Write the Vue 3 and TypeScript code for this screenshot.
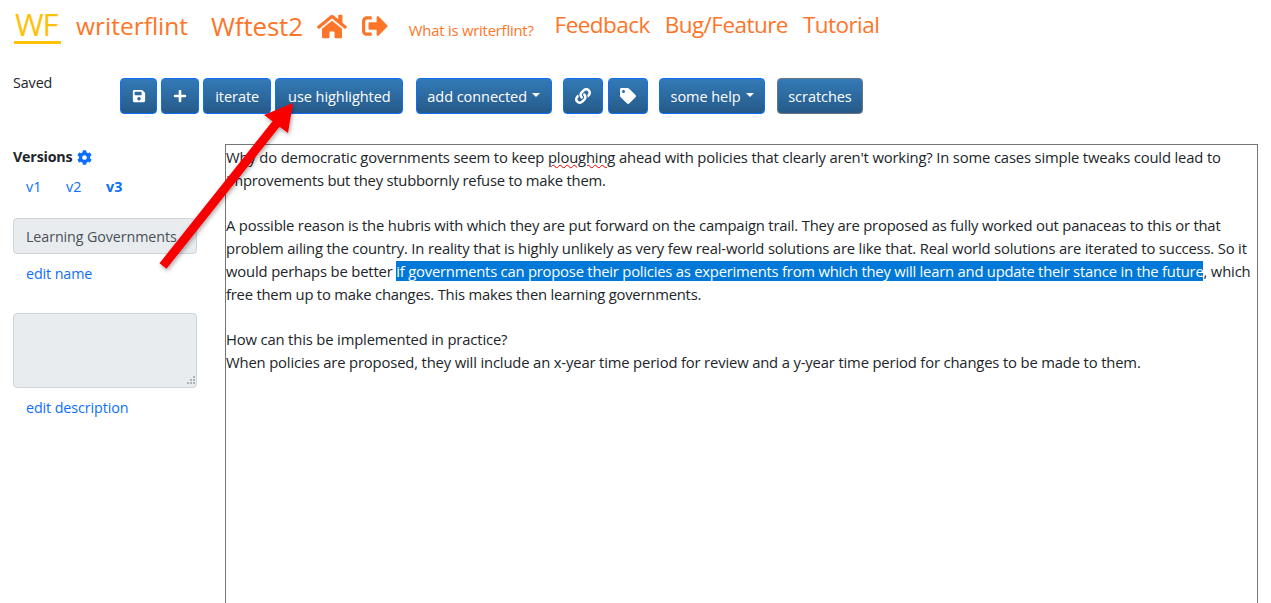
<script setup lang="ts">
interface Seg { t: string; hl?: boolean; sp?: boolean }
const lines: Seg[][] = [
  [{ t: 'Why do democratic governments seem to keep ' }, { t: 'ploughing', sp: true }, { t: " ahead with policies that clearly aren't working? In some cases simple tweaks could lead to" }],
  [{ t: 'improvements but they stubbornly refuse to make them.' }],
  [],
  [{ t: 'A possible reason is the hubris with which they are put forward on the campaign trail. They are proposed as fully worked out panaceas to this or that' }],
  [{ t: 'problem ailing the country. In reality that is highly unlikely as very few real-world solutions are like that. Real world solutions are iterated to success. So it' }],
  [{ t: 'would perhaps be better ' }, { t: 'if governments can propose their policies as experiments from which they will learn and update their stance in the future', hl: true }, { t: ', which' }],
  [{ t: 'free them up to make changes. This makes then learning governments.' }],
  [],
  [{ t: 'How can this be implemented in practice?' }],
  [{ t: 'When policies are proposed, they will include an x-year time period for review and a y-year time period for changes to be made to them.' }],
]
</script>

<template>
  <div class="page">
    <nav class="nav">
      <a class="brand">WF</a>
      <a class="big name">writerflint</a>
      <a class="big proj">Wftest2</a>
      <svg class="home" viewBox="0 0 576 512"><path fill="currentColor" d="M280.400 148.300L96 300.100V464a16 16 0 0 0 16 16l112-.3a16 16 0 0 0 15.900-16V368a16 16 0 0 1 16-16h64a16 16 0 0 1 16 16v95.600a16 16 0 0 0 16 16.100l112 .3a16 16 0 0 0 16-16V300L295.700 148.300a12.200 12.200 0 0 0-15.300 0zM571.600 251.500L488 182.600V44a12 12 0 0 0-12-12h-56a12 12 0 0 0-12 12v72.600L318.500 43a48 48 0 0 0-61 0L4.300 251.500a12 12 0 0 0-1.600 16.900l25.500 31A12 12 0 0 0 45.200 301l235.200-193.700a12.200 12.200 0 0 1 15.300 0L530.900 301a12 12 0 0 0 16.900-1.600l25.500-31a12 12 0 0 0-1.700-16.900z"/></svg>
      <svg class="exit" viewBox="0 0 512 512"><path fill="currentColor" d="M497 273L329 441c-15 15-41 4.500-41-17v-96H152c-13.300 0-24-10.700-24-24v-96c0-13.300 10.700-24 24-24h136V88c0-21.400 25.900-32 41-17l168 168c9.300 9.400 9.300 24.600 0 34zM192 436v-40c0-6.600-5.400-12-12-12H96c-17.700 0-32-14.300-32-32V160c0-17.700 14.300-32 32-32h84c6.600 0 12-5.400 12-12V76c0-6.600-5.400-12-12-12H96c-53 0-96 43-96 96v192c0 53 43 96 96 96h84c6.600 0 12-5.400 12-12z"/></svg>
      <a class="small">What is writerflint?</a>
      <a class="big fb">Feedback</a>
      <a class="big bug">Bug/Feature</a>
      <a class="big tut">Tutorial</a>
    </nav>

    <div class="toolbar">
      <span class="saved">Saved</span>
      <div class="btns">
        <button class="btn icon">
          <svg width="14" height="14" viewBox="0 0 448 512"><path fill="#fff" d="M433.900 129.900l-83.900-83.900A48 48 0 0 0 316.100 32H48C21.500 32 0 53.500 0 80v352c0 26.500 21.500 48 48 48h352c26.500 0 48-21.500 48-48V163.900a48 48 0 0 0-14.100-34zM224 416c-35.300 0-64-28.700-64-64 0-35.300 28.700-64 64-64s64 28.700 64 64c0 35.300-28.700 64-64 64zm96-304.500V212c0 6.600-5.400 12-12 12H76c-6.600 0-12-5.400-12-12V108c0-6.600 5.400-12 12-12h228.500c3.200 0 6.200 1.300 8.500 3.500l3.500 3.500c2.200 2.200 3.500 5.300 3.500 8.500z"/></svg>
        </button>
        <button class="btn icon">
          <svg width="14" height="14" viewBox="0 0 448 512"><path fill="#fff" d="M416 208H272V64c0-17.700-14.300-32-32-32h-32c-17.700 0-32 14.300-32 32v144H32c-17.700 0-32 14.300-32 32v32c0 17.700 14.300 32 32 32h144v144c0 17.700 14.300 32 32 32h32c17.700 0 32-14.300 32-32V304h144c17.700 0 32-14.300 32-32v-32c0-17.700-14.300-32-32-32z"/></svg>
        </button>
        <button class="btn w-iter">iterate</button>
        <button class="btn w-use">use highlighted</button>
        <button class="btn w-add">add connected<i class="caret"></i></button>
        <button class="btn w-link">
          <svg width="16" height="16" viewBox="0 0 512 512"><path fill="#fff" d="M326.600 185.400c59.700 59.800 58.900 155.700.4 214.600l-.4.400-67.200 67.200c-59.300 59.300-155.700 59.300-215 0-59.300-59.300-59.300-155.700 0-215l37.100-37.100c9.800-9.800 26.800-3.300 27.300 10.600.6 17.700 3.800 35.500 9.700 52.700 2 5.800.6 12.300-3.800 16.600l-13.100 13.100c-28 28-28.900 73.700-1.200 102 28 28.600 74.100 28.700 102.300.5l67.200-67.200c28.200-28.200 28.100-73.800 0-101.800-3.700-3.700-7.400-6.600-10.300-8.600a16 16 0 0 1-6.900-12.600c-.4-10.600 3.300-21.400 11.700-29.800l21.100-21.100c5.500-5.500 14.200-6.200 20.600-1.700a152.500 152.500 0 0 1 20.500 17.200zM467.500 44.400c-59.300-59.300-155.700-59.300-215 0l-67.200 67.200-.4.400c-58.600 58.900-59.400 154.800.4 214.600a152.500 152.500 0 0 0 20.500 17.200c6.400 4.500 15.100 3.800 20.600-1.700l21.100-21.100c8.400-8.400 12.100-19.200 11.700-29.800a16 16 0 0 0-6.900-12.600c-2.900-2-6.600-4.900-10.300-8.600-28.100-28-28.200-73.600 0-101.800l67.200-67.200c28.200-28.200 74.300-28.100 102.300.5 27.800 28.300 26.900 74-1.100 102l-13.100 13.100c-4.400 4.300-5.800 10.800-3.800 16.600 5.900 17.200 9.100 35 9.700 52.700.5 13.900 17.500 20.400 27.300 10.600l37.100-37.100c59.300-59.300 59.300-155.700 0-215z"/></svg>
        </button>
        <button class="btn w-tag">
          <svg width="16" height="16" viewBox="0 0 512 512"><path fill="#fff" d="M0 252.100V48C0 21.500 21.500 0 48 0h204.100a48 48 0 0 1 33.900 14.100l211.900 211.900c18.700 18.700 18.700 49.100 0 67.900L293.800 497.900c-18.700 18.700-49.100 18.700-67.900 0L14.100 286.100A48 48 0 0 1 0 252.100zM112 64c-26.500 0-48 21.500-48 48s21.500 48 48 48 48-21.500 48-48-21.500-48-48-48z"/></svg>
        </button>
        <button class="btn w-help">some help<i class="caret"></i></button>
        <button class="btn w-scr">scratches</button>
      </div>
    </div>

    <div class="main">
      <aside class="side">
        <div class="versions">Versions
          <svg width="15" height="15" viewBox="0 0 512 512"><path fill="#0d6efd" d="M487.400 315.700l-42.600-24.600c4.300-23.200 4.300-47 0-70.200l42.600-24.600c4.900-2.800 7.100-8.600 5.500-14-11.100-35.600-30-67.800-54.700-94.600-3.800-4.100-10-5.100-14.800-2.300L380.800 110c-17.900-15.400-38.500-27.300-60.800-35.100V25.800c0-5.600-3.900-10.500-9.400-11.700-36.700-8.200-74.300-7.800-109.200 0-5.500 1.200-9.400 6.100-9.400 11.700V75c-22.200 7.900-42.800 19.800-60.800 35.100L88.700 85.500c-4.900-2.800-11-1.900-14.800 2.300-24.700 26.700-43.600 58.900-54.700 94.600-1.700 5.400.6 11.200 5.500 14L67.300 221c-4.300 23.200-4.300 47 0 70.200l-42.600 24.600c-4.900 2.800-7.100 8.600-5.500 14 11.100 35.600 30 67.800 54.700 94.600 3.800 4.100 10 5.100 14.800 2.300l42.600-24.600c17.900 15.400 38.500 27.300 60.800 35.100v49.200c0 5.600 3.900 10.500 9.400 11.700 36.700 8.200 74.300 7.800 109.200 0 5.500-1.200 9.400-6.100 9.400-11.700v-49.200c22.200-7.900 42.800-19.800 60.800-35.100l42.600 24.600c4.900 2.800 11 1.900 14.800-2.300 24.700-26.700 43.600-58.900 54.700-94.600 1.500-5.500-.7-11.300-5.600-14.100zM256 336c-44.100 0-80-35.900-80-80s35.900-80 80-80 80 35.900 80 80-35.900 80-80 80z"/></svg>
        </div>
        <div class="vlist"><a>v1</a><a>v2</a><a class="cur">v3</a></div>
        <div class="field name-f">Learning Governments</div>
        <a class="edit e1">edit name</a>
        <div class="field desc">
          <svg class="grip" width="9" height="9" viewBox="0 0 9 9"><g fill="#aeb2b6"><rect x="7" y="0" width="2" height="2"/><rect x="4" y="3" width="2" height="2"/><rect x="7" y="3" width="2" height="2"/><rect x="1" y="6" width="2" height="2"/><rect x="4" y="6" width="2" height="2"/><rect x="7" y="6" width="2" height="2"/></g></svg>
        </div>
        <a class="edit e2">edit description</a>
      </aside>
      <section class="editor">
        <div v-for="(l, i) in lines" :key="i" class="ln"><span v-for="(s, j) in l" :key="j" :class="{ hl: s.hl, sp: s.sp }">{{ s.t }}</span></div>
      </section>
    </div>

    <svg class="arrow" width="160" height="185" viewBox="0 0 160 185">
      <defs><filter id="sh" x="-20%" y="-20%" width="140%" height="140%"><feDropShadow dx="1" dy="2" stdDeviation="2" flood-color="#000" flood-opacity=".35"/></filter></defs>
      <path filter="url(#sh)" fill="#f90000" d="M143 8 L114 20 L122.500 26.200 L9.500 168.200 L16.500 173.800 L129.500 31.800 L138 38 Z"/>
    </svg>
  </div>
</template>

<style>
html, body { margin: 0; background: #fff; overflow: hidden; }
</style>

<style scoped>
.page { position: relative; width: 1271px; height: 603px; overflow: hidden; font-family: "Open Sans", "Noto Sans", sans-serif; color: #212529; font-size: 14.300px; }
.nav { display: flex; align-items: center; height: 46px; padding: 5px 0 0 14px; box-sizing: border-box; color: #fd7528; }
.nav a { color: #fd7528; white-space: nowrap; }
.big { font-size: 22.500px; font-weight: 400; letter-spacing: -.55px; }
.brand { color: #ffc107 !important; font-size: 31px; letter-spacing: -1px; border-bottom: 3px solid #ffc107; line-height: 33px; width: 47px; text-indent: 1px; }
.name { margin-left: 15px; font-size: 24.500px; letter-spacing: 0; }
.proj { margin-left: 23px; font-size: 26px; letter-spacing: -.2px; margin-top: 1px; }
.home { width: 30px; height: 27px; margin-left: 14px; margin-top: 1px; }
.exit { width: 26px; height: 26px; margin-left: 15px; margin-top: 1px; }
.small { margin-left: 21px; font-size: 14.800px; letter-spacing: -.2px; padding-top: 8px; }
.fb { margin-left: 21px; margin-bottom: 2px; }
.bug { margin-left: 15px; margin-bottom: 2px; }
.tut { margin-left: 15px; margin-bottom: 2px; }

.toolbar { display: flex; height: 98px; margin-top: 28px; padding-left: 13px; position: relative; }
.saved { width: 106.700px; flex: none; line-height: 18px; font-size: 14.300px; letter-spacing: -.1px; }
.btns { display: flex; gap: 4px; height: 36px; margin-top: 4px; }
.btn { height: 36px; padding: 0; border: 1px solid #0d6efd; border-radius: 4px; color: #fff; background: linear-gradient(#337ab7, #265a88); font: inherit; font-size: 14.500px; letter-spacing: -.05px; display: flex; align-items: center; justify-content: center; box-sizing: border-box; white-space: nowrap; flex: none; }
.icon { width: 37.700px; }
.w-iter { width: 68.300px; }
.w-use { width: 128px; }
.w-add { width: 136px; margin-left: 8.300px; }
.w-link { width: 39.700px; margin-left: 7.300px; }
.w-tag { width: 40px; margin-left: 1px; }
.w-help { width: 106.300px; margin-left: 7.300px; }
.w-scr { width: 86.300px; margin-left: 7.600px; border-color: #6c757d; }
.caret { display: inline-block; margin-left: 5px; margin-top: -3px; border-top: 4.500px solid #fff; border-left: 4.500px solid transparent; border-right: 4.500px solid transparent; }

.main { position: absolute; left: 0; top: 144px; right: 0; bottom: 0; display: flex; }
.side { width: 225px; flex: none; padding-left: 13px; box-sizing: border-box; display: flex; flex-direction: column; align-items: flex-start; }
.versions { font-weight: 700; font-size: 14.300px; letter-spacing: -.2px; line-height: 24px; display: flex; align-items: center; gap: 5px; height: 24px; margin-top: 1px; }
.vlist { display: flex; margin-top: 8px; padding-left: 13px; line-height: 20px; }
.vlist a { color: #0d6efd; width: 40px; }
.vlist a.cur { font-weight: 700; }
.field { width: 184px; background: #e9ecef; border: 1px solid #ced4da; border-radius: 4px; box-sizing: border-box; color: #495057; position: relative; }
.name-f { height: 36px; margin-top: 21px; padding-left: 12px; line-height: 36px; letter-spacing: -.1px; white-space: nowrap; overflow: hidden; }
.edit { color: #0d6efd; margin-left: 13px; line-height: 20px; letter-spacing: -.1px; }
.e1 { margin-top: 10px; }
.desc { height: 75px; margin-top: 29px; }
.grip { position: absolute; right: 1px; bottom: 2px; }
.e2 { margin-top: 10px; }
.editor { width: 1033px; height: 470px; border: 1px solid #767676; box-sizing: border-box; padding: .7px 0 0; white-space: pre; }
.ln { height: 22.850px; line-height: 23px; font-size: 14.800px; letter-spacing: -.155px; color: #212529; }
.ln:nth-child(2) { letter-spacing: -.23px; }
.ln:nth-child(4) { letter-spacing: -.19px; }
.ln:nth-child(5) { letter-spacing: -.17px; }
.ln:nth-child(7) { letter-spacing: -.215px; }
.hl { background: #0078d7; color: #fff; letter-spacing: -.22px; }
.sp { text-decoration: underline wavy #e00; text-decoration-thickness: 1px; }
.arrow { position: absolute; left: 150px; top: 95px; }
</style>
